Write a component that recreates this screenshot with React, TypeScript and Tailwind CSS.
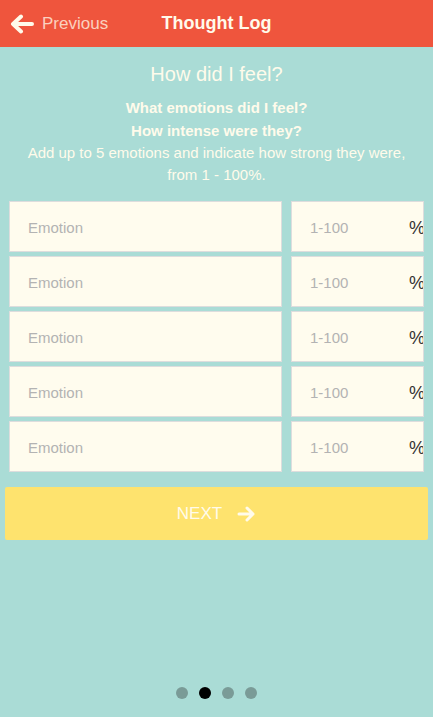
import React from "react";

function ArrowLeft() {
  return (
    <svg width="24" height="20" viewBox="0 0 24 20" fill="none">
      <path d="M22 10H4M11 2.5L3 10l8 7.5" stroke="#fffbeb" strokeWidth="4" strokeLinecap="round" strokeLinejoin="round" />
    </svg>
  );
}

function ArrowRight() {
  return (
    <svg width="19" height="16" viewBox="0 0 19 16" fill="none">
      <path d="M2 8h14M10 2l6 6-6 6" stroke="#fffbeb" strokeWidth="3" strokeLinecap="round" strokeLinejoin="round" />
    </svg>
  );
}

function Row() {
  return (
    <div className="flex gap-[9px] h-[51px] mb-[4px]">
      <div className="w-[273px] shrink-0 bg-[#fffcee] border border-[#dddddd] flex items-center pl-[18px] pt-[3px]">
        <span className="text-[15px] text-[#b3b3b3]">Emotion</span>
      </div>
      <div className="w-[133px] shrink-0 bg-[#fffcee] border border-[#dddddd] flex items-center pl-[18px] pt-[3px] overflow-hidden relative">
        <span className="text-[15px] text-[#b3b3b3]">1-100</span>
        <span className="absolute left-[117px] text-[18px] text-[#333]">%</span>
      </div>
    </div>
  );
}

export default function App() {
  return (
    <div className="w-[433px] h-[717px] bg-[#aadcd6] flex flex-col overflow-hidden" style={{ fontFamily: '"Liberation Sans", Arial, sans-serif' }}>
      <div className="h-[47px] bg-[#ef553d] flex items-center relative shrink-0">
        <div className="flex items-center pl-[10px] gap-[8px]">
          <ArrowLeft />
          <span className="text-[17px] text-[#fffbeb]/75">Previous</span>
        </div>
        <div className="absolute inset-x-0 text-center text-[18px] font-bold text-[#fffbeb] pointer-events-none">Thought Log</div>
      </div>
      <div className="text-center text-[#fffbeb] pt-[14px]">
        <div className="text-[20px] leading-[26px]">How did I feel?</div>
        <div className="mt-[9px] text-[15px] leading-[23px] font-bold">What emotions did I feel?</div>
        <div className="text-[15px] leading-[23px] font-bold">How intense were they?</div>
        <div className="text-[15px] leading-[22px] px-[14px]">Add up to 5 emotions and indicate how strong they were, from 1 - 100%.</div>
      </div>
      <div className="pl-[9px] mt-[15px]">
        <Row />
        <Row />
        <Row />
        <Row />
        <Row />
      </div>
      <div className="px-[5px] mt-[11px]">
        <div className="h-[53px] bg-[#fee36e] rounded-[2px] flex items-center justify-center gap-[15px]">
          <span className="text-[17px] text-[#fffbeb]">NEXT</span>
          <ArrowRight />
        </div>
      </div>
      <div className="flex-1" />
      <div className="flex justify-center gap-[11px] pb-[18px]">
        <div className="w-[12px] h-[12px] rounded-full bg-[#7a9b97]" />
        <div className="w-[12px] h-[12px] rounded-full bg-black" />
        <div className="w-[12px] h-[12px] rounded-full bg-[#7a9b97]" />
        <div className="w-[12px] h-[12px] rounded-full bg-[#7a9b97]" />
      </div>
    </div>
  );
}
